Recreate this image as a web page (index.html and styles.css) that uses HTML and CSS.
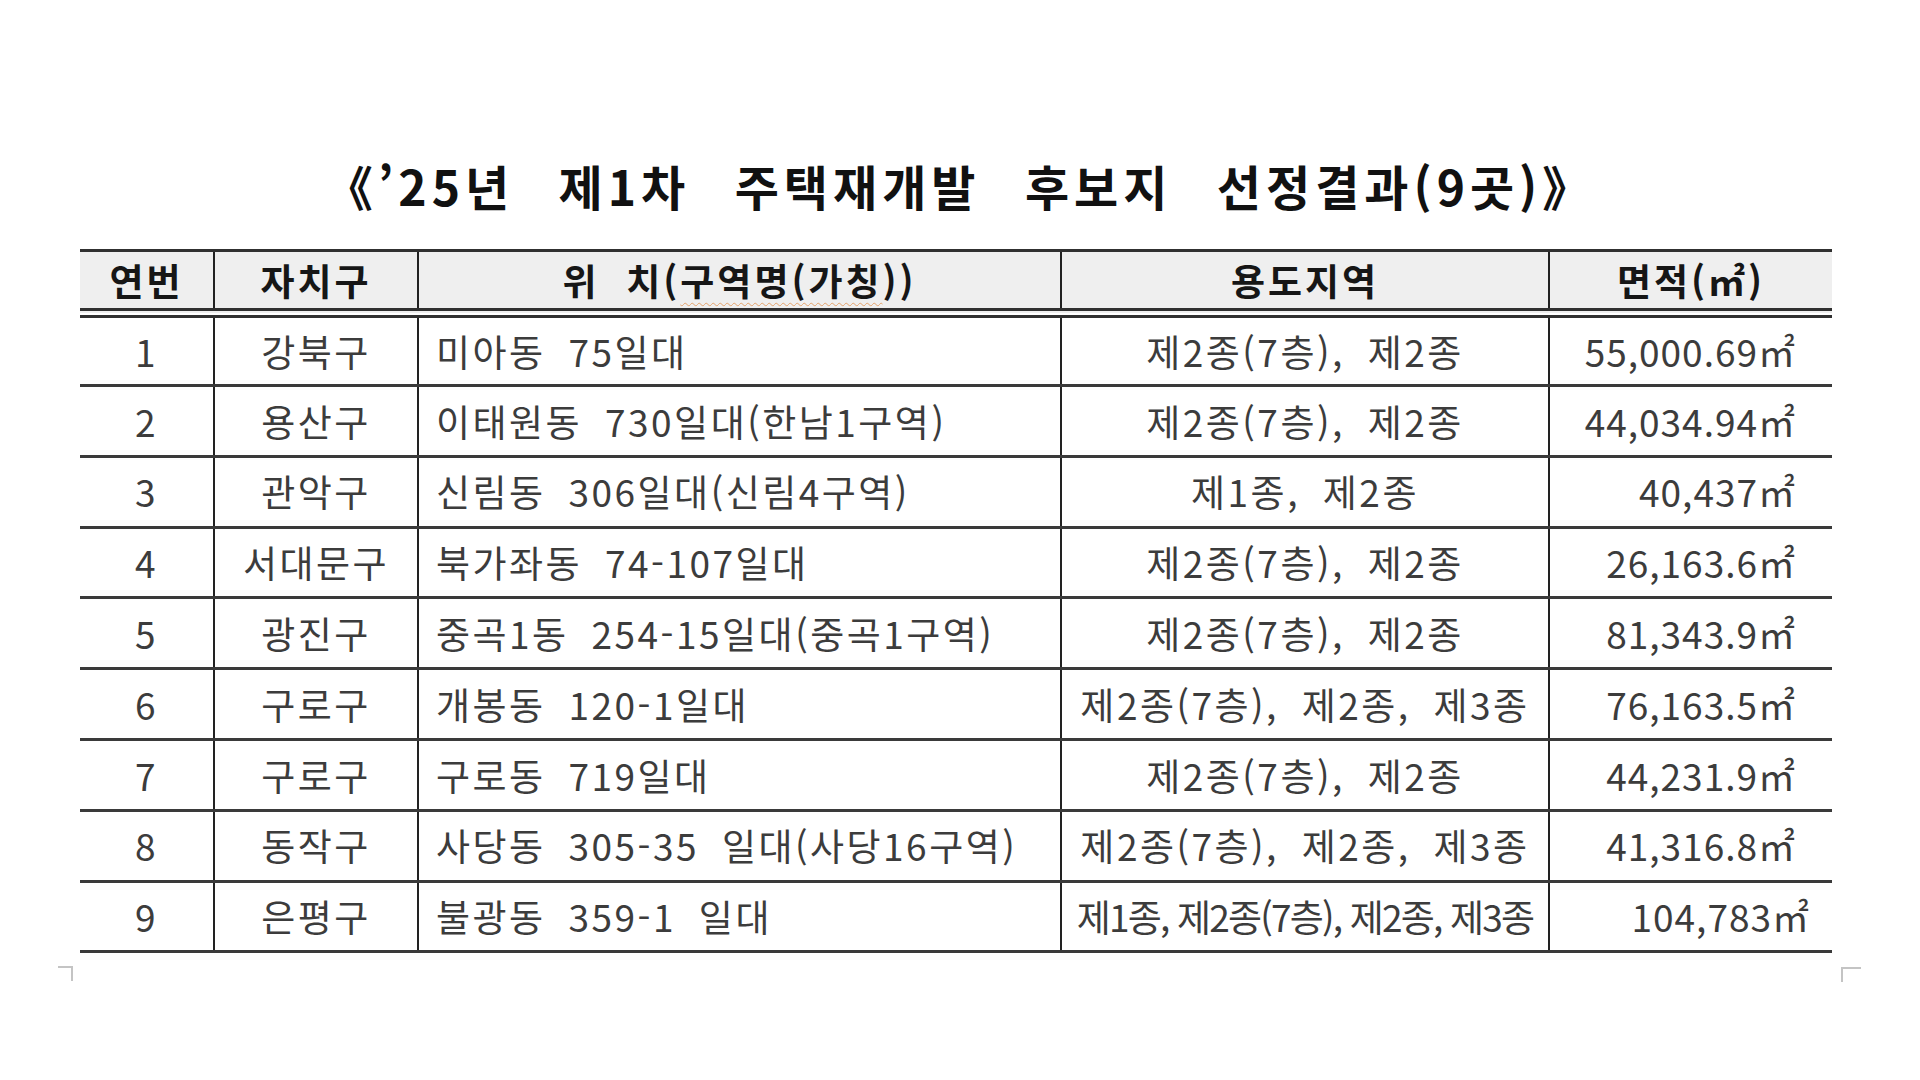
FILE: index.html
```html
<!DOCTYPE html>
<html lang="ko">
<head>
<meta charset="utf-8">
<title>'25년 제1차 주택재개발 후보지 선정결과</title>
<link rel="stylesheet" href="styles.css">
</head>
<body>
<div class="page">
  <h1 class="title">《’25년 제1차 주택재개발 후보지 선정결과(9곳)》</h1>
  <table class="sites">
    <colgroup>
      <col class="c-no"><col class="c-gu"><col class="c-loc"><col class="c-zone"><col class="c-area">
    </colgroup>
    <thead>
      <tr>
        <th>연번</th>
        <th>자치구</th>
        <th>위&nbsp;&nbsp;치(<span class="squiggle">구역명(가칭</span>))</th>
        <th>용도지역</th>
        <th>면적(㎡)</th>
      </tr>
    </thead>
    <tbody>
      <tr><td class="ctr">1</td><td class="ctr">강북구</td><td class="loc">미아동 75일대</td><td class="ctr">제2종(7층), 제2종</td><td class="area">55,000.69㎡</td></tr>
      <tr><td class="ctr">2</td><td class="ctr">용산구</td><td class="loc">이태원동 730일대(한남1구역)</td><td class="ctr">제2종(7층), 제2종</td><td class="area">44,034.94㎡</td></tr>
      <tr><td class="ctr">3</td><td class="ctr">관악구</td><td class="loc">신림동 306일대(신림4구역)</td><td class="ctr">제1종, 제2종</td><td class="area">40,437㎡</td></tr>
      <tr><td class="ctr">4</td><td class="ctr">서대문구</td><td class="loc">북가좌동 74-107일대</td><td class="ctr">제2종(7층), 제2종</td><td class="area">26,163.6㎡</td></tr>
      <tr><td class="ctr">5</td><td class="ctr">광진구</td><td class="loc">중곡1동 254-15일대(중곡1구역)</td><td class="ctr">제2종(7층), 제2종</td><td class="area">81,343.9㎡</td></tr>
      <tr><td class="ctr">6</td><td class="ctr">구로구</td><td class="loc">개봉동 120-1일대</td><td class="ctr">제2종(7층), 제2종, 제3종</td><td class="area">76,163.5㎡</td></tr>
      <tr><td class="ctr">7</td><td class="ctr">구로구</td><td class="loc">구로동 719일대</td><td class="ctr">제2종(7층), 제2종</td><td class="area">44,231.9㎡</td></tr>
      <tr><td class="ctr">8</td><td class="ctr">동작구</td><td class="loc">사당동 305-35 일대(사당16구역)</td><td class="ctr">제2종(7층), 제2종, 제3종</td><td class="area">41,316.8㎡</td></tr>
      <tr><td class="ctr">9</td><td class="ctr">은평구</td><td class="loc">불광동 359-1 일대</td><td class="ctr tight">제1종, 제2종(7층), 제2종, 제3종</td><td class="area wide">104,783㎡</td></tr>
    </tbody>
  </table>
  <span class="mark mark-bl"></span>
  <span class="mark mark-br"></span>
</div>
</body>
</html>
```

FILE: styles.css
```css
html, body {
  margin: 0;
  padding: 0;
  background: #ffffff;
}

body {
  font-family: "Noto Sans CJK KR", "Noto Sans", sans-serif;
  color: #3c3c3c;
}

.page {
  position: relative;
  width: 1920px;
  height: 1080px;
  padding-top: 162px;
  box-sizing: border-box;
}

.title {
  margin: 0 0 41px 0;
  padding-left: 0;
  text-align: center;
  font-size: 48px;
  line-height: 46px;
  font-weight: 700;
  color: #111111;
  word-spacing: 26px;
  letter-spacing: 5px;
}

.sites {
  margin-left: 80px;
  width: 1752px;
  border-collapse: collapse;
  table-layout: fixed;
}

.c-no { width: 134px; }
.c-gu { width: 204px; }
.c-loc { width: 643px; }
.c-zone { width: 488px; }
.c-area { width: 283px; }

.sites th {
  background: #efefef;
  height: 56px;
  padding: 0;
  font-size: 37px;
  font-weight: 700;
  color: #161616;
  text-align: center;
  vertical-align: middle;
  line-height: 1.1;
  letter-spacing: 3px;
  border-top: 3px solid #303030;
  border-bottom: 10px double #303030;
}

.sites td {
  height: 67.8px;
  padding: 0;
  font-size: 37px;
  line-height: 1.1;
  vertical-align: middle;
  border-bottom: 3px solid #3a3a3a;
  letter-spacing: 2.5px;
  word-spacing: 10px;
  white-space: nowrap;
}

.sites tbody tr:first-child td {
  height: 66px;
}

.sites th + th,
.sites td + td {
  border-left: 2px solid #222222;
}

.ctr { text-align: center; }

.loc {
  text-align: left;
  padding-left: 17px !important;
}

.area {
  text-align: right;
  padding-right: 36px !important;
  letter-spacing: 1px !important;
}

.area.wide { padding-right: 22px !important; }

.sites td.tight {
  letter-spacing: -1.8px;
  word-spacing: 0;
}

.squiggle {
  text-decoration: underline wavy #e3a26b;
  text-decoration-thickness: 1px;
  text-underline-offset: 6px;
}

.mark {
  position: absolute;
  width: 13px;
  height: 13px;
  border-color: #c4c4c4;
  border-style: solid;
  border-width: 0;
}

.mark-bl {
  left: 58px;
  top: 966px;
  border-top-width: 2px;
  border-right-width: 2px;
}

.mark-br {
  left: 1841px;
  top: 967px;
  width: 18px;
  border-top-width: 2px;
  border-left-width: 2px;
}
```
